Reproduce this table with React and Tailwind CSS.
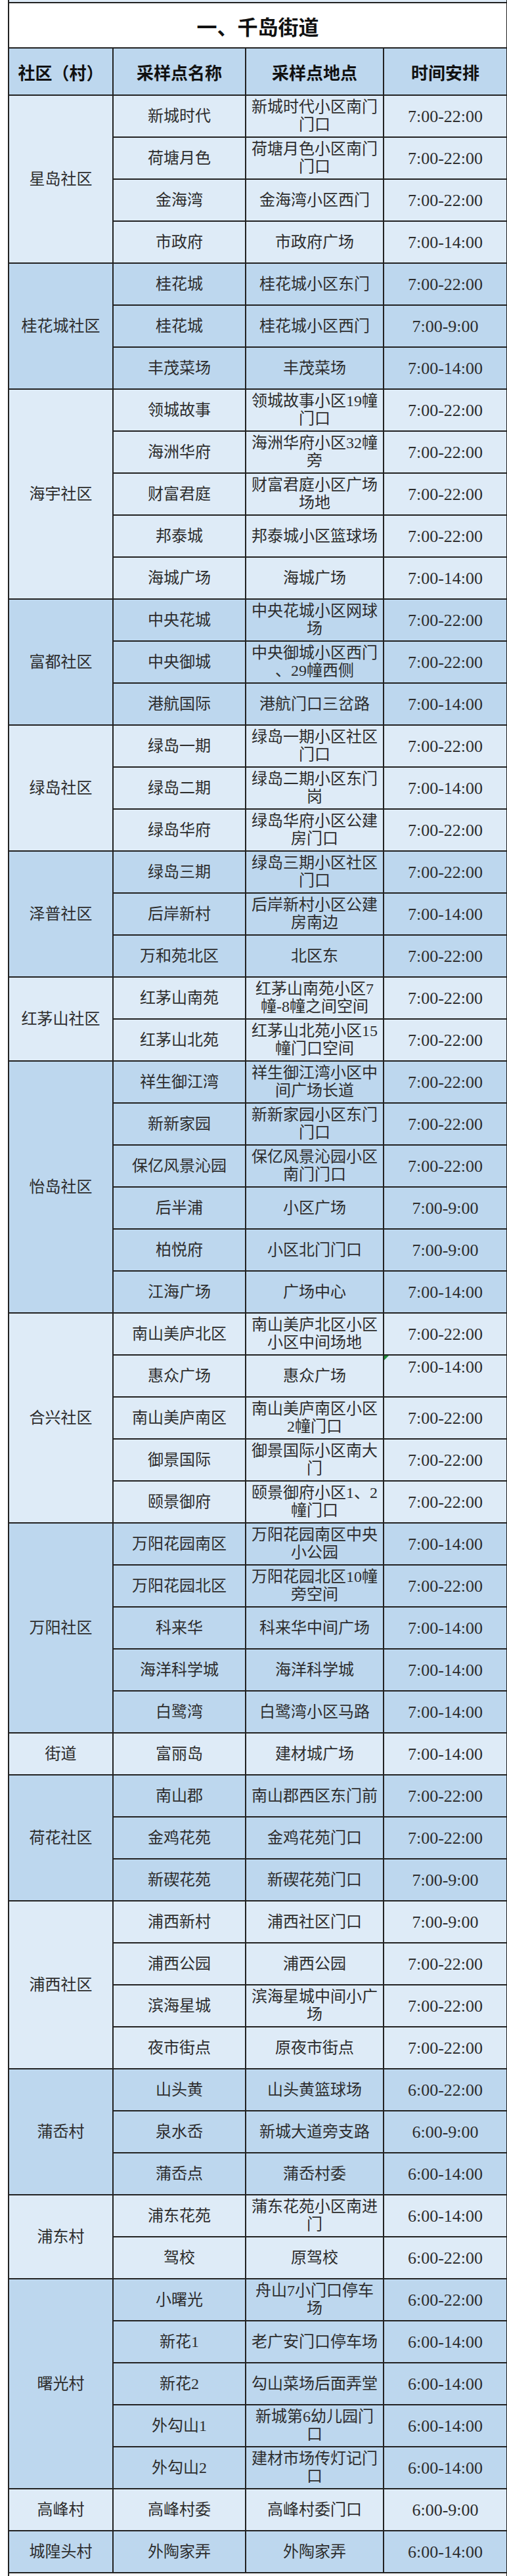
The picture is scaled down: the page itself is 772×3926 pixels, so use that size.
const groups = [
  { name: '星岛社区', rows: [
    ['新城时代', '新城时代小区南门\n门口', '7:00-22:00'],
    ['荷塘月色', '荷塘月色小区南门\n门口', '7:00-22:00'],
    ['金海湾', '金海湾小区西门', '7:00-22:00'],
    ['市政府', '市政府广场', '7:00-14:00'],
  ] },
  { name: '桂花城社区', rows: [
    ['桂花城', '桂花城小区东门', '7:00-22:00'],
    ['桂花城', '桂花城小区西门', '7:00-9:00'],
    ['丰茂菜场', '丰茂菜场', '7:00-14:00'],
  ] },
  { name: '海宇社区', rows: [
    ['领城故事', '领城故事小区19幢\n门口', '7:00-22:00'],
    ['海洲华府', '海洲华府小区32幢\n旁', '7:00-22:00'],
    ['财富君庭', '财富君庭小区广场\n场地', '7:00-22:00'],
    ['邦泰城', '邦泰城小区篮球场', '7:00-22:00'],
    ['海城广场', '海城广场', '7:00-14:00'],
  ] },
  { name: '富都社区', rows: [
    ['中央花城', '中央花城小区网球\n场', '7:00-22:00'],
    ['中央御城', '中央御城小区西门\n、29幢西侧', '7:00-22:00'],
    ['港航国际', '港航门口三岔路', '7:00-14:00'],
  ] },
  { name: '绿岛社区', rows: [
    ['绿岛一期', '绿岛一期小区社区\n门口', '7:00-22:00'],
    ['绿岛二期', '绿岛二期小区东门\n岗', '7:00-14:00'],
    ['绿岛华府', '绿岛华府小区公建\n房门口', '7:00-22:00'],
  ] },
  { name: '泽普社区', rows: [
    ['绿岛三期', '绿岛三期小区社区\n门口', '7:00-22:00'],
    ['后岸新村', '后岸新村小区公建\n房南边', '7:00-14:00'],
    ['万和苑北区', '北区东', '7:00-22:00'],
  ] },
  { name: '红茅山社区', rows: [
    ['红茅山南苑', '红茅山南苑小区7\n幢-8幢之间空间', '7:00-22:00'],
    ['红茅山北苑', '红茅山北苑小区15\n幢门口空间', '7:00-22:00'],
  ] },
  { name: '怡岛社区', rows: [
    ['祥生御江湾', '祥生御江湾小区中\n间广场长道', '7:00-22:00'],
    ['新新家园', '新新家园小区东门\n门口', '7:00-22:00'],
    ['保亿风景沁园', '保亿风景沁园小区\n南门门口', '7:00-22:00'],
    ['后半浦', '小区广场', '7:00-9:00'],
    ['柏悦府', '小区北门门口', '7:00-9:00'],
    ['江海广场', '广场中心', '7:00-14:00'],
  ] },
  { name: '合兴社区', rows: [
    ['南山美庐北区', '南山美庐北区小区\n小区中间场地', '7:00-22:00'],
    ['惠众广场', '惠众广场', '7:00-14:00', true],
    ['南山美庐南区', '南山美庐南区小区\n2幢门口', '7:00-22:00'],
    ['御景国际', '御景国际小区南大\n门', '7:00-22:00'],
    ['颐景御府', '颐景御府小区1、2\n幢门口', '7:00-22:00'],
  ] },
  { name: '万阳社区', rows: [
    ['万阳花园南区', '万阳花园南区中央\n小公园', '7:00-14:00'],
    ['万阳花园北区', '万阳花园北区10幢\n旁空间', '7:00-22:00'],
    ['科来华', '科来华中间广场', '7:00-14:00'],
    ['海洋科学城', '海洋科学城', '7:00-14:00'],
    ['白鹭湾', '白鹭湾小区马路', '7:00-14:00'],
  ] },
  { name: '街道', rows: [
    ['富丽岛', '建材城广场', '7:00-14:00'],
  ] },
  { name: '荷花社区', rows: [
    ['南山郡', '南山郡西区东门前', '7:00-22:00'],
    ['金鸡花苑', '金鸡花苑门口', '7:00-22:00'],
    ['新碶花苑', '新碶花苑门口', '7:00-9:00'],
  ] },
  { name: '浦西社区', rows: [
    ['浦西新村', '浦西社区门口', '7:00-9:00'],
    ['浦西公园', '浦西公园', '7:00-22:00'],
    ['滨海星城', '滨海星城中间小广\n场', '7:00-22:00'],
    ['夜市街点', '原夜市街点', '7:00-22:00'],
  ] },
  { name: '蒲岙村', rows: [
    ['山头黄', '山头黄篮球场', '6:00-22:00'],
    ['泉水岙', '新城大道旁支路', '6:00-9:00'],
    ['蒲岙点', '蒲岙村委', '6:00-14:00'],
  ] },
  { name: '浦东村', rows: [
    ['浦东花苑', '蒲东花苑小区南进\n门', '6:00-14:00'],
    ['驾校', '原驾校', '6:00-22:00'],
  ] },
  { name: '曙光村', rows: [
    ['小曙光', '舟山7小门口停车\n场', '6:00-22:00'],
    ['新花1', '老广安门口停车场', '6:00-14:00'],
    ['新花2', '勾山菜场后面弄堂', '6:00-14:00'],
    ['外勾山1', '新城第6幼儿园门\n口', '6:00-14:00'],
    ['外勾山2', '建材市场传灯记门\n口', '6:00-14:00'],
  ] },
  { name: '高峰村', rows: [
    ['高峰村委', '高峰村委门口', '6:00-9:00'],
  ] },
  { name: '城隍头村', rows: [
    ['外陶家弄', '外陶家弄', '6:00-14:00'],
  ] },
];

const cell = 'border-2 border-[#222] px-1 py-0 text-center align-middle';

export default function App() {
  return (
    <div className="min-h-screen bg-white">
      <table className="ml-[12px] w-[759px] table-fixed border-collapse font-['Liberation_Serif','Noto_Sans_CJK_SC',serif] text-[#2d2d2d]">
        <colgroup>
          <col className="w-[159px]" />
          <col className="w-[202px]" />
          <col className="w-[210px]" />
          <col className="w-[188px]" />
        </colgroup>
        <tbody>
          <tr className="h-[4px]">
            <td colSpan={4} className="border-2 border-t-0 border-[#222] bg-[#deebf7] p-0" />
          </tr>
          <tr className="h-[69px]">
            <td colSpan={4} className={`${cell} bg-white pt-1 font-['Noto_Sans_CJK_SC',sans-serif] text-[31px] font-bold text-[#111]`}>
              一、千岛街道
            </td>
          </tr>
          <tr className="h-[72px] bg-[#bdd7ee] font-['Noto_Sans_CJK_SC',sans-serif] text-[26px] font-bold text-[#111]">
            <td className={cell}>社区（村）</td>
            <td className={cell}>采样点名称</td>
            <td className={cell}>采样点地点</td>
            <td className={cell}>时间安排</td>
          </tr>
          {groups.map((g, gi) => {
            const bg = gi % 2 === 0 ? 'bg-[#deebf7]' : 'bg-[#bdd7ee]';
            return g.rows.map((r, ri) => (
              <tr key={`${gi}-${ri}`} className={`h-[64px] ${bg} text-[24px] leading-[27px]`}>
                {ri === 0 && (
                  <td rowSpan={g.rows.length} className={cell}>{g.name}</td>
                )}
                <td className={`${cell} whitespace-pre`}>{r[0]}</td>
                <td className={`${cell} whitespace-pre`}>{r[1]}</td>
                {r[3] ? (
                  <td className={`${cell} relative pt-[4px] align-top text-[26px]`}>
                    <svg className="absolute left-0 top-0" width="7" height="7" viewBox="0 0 7 7">
                      <polygon points="0,0 7,0 0,7" fill="#1f8a3a" />
                    </svg>
                    {r[2]}
                  </td>
                ) : (
                  <td className={`${cell} text-[26px]`}>{r[2]}</td>
                )}
              </tr>
            ));
          })}
          <tr className="h-[8px]">
            <td colSpan={4} className="border-2 border-b-0 border-[#222] bg-white p-0" />
          </tr>
        </tbody>
      </table>
    </div>
  );
}
